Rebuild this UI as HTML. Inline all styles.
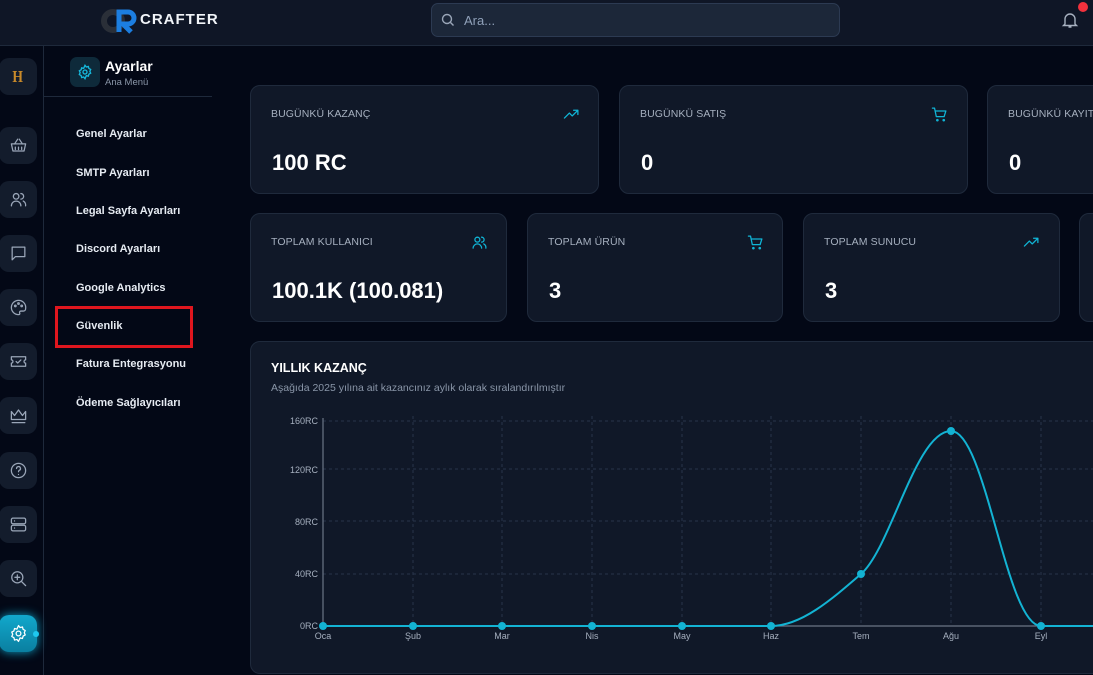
<!DOCTYPE html>
<html><head><meta charset="utf-8"><style>
*{box-sizing:border-box;margin:0;padding:0}
body{width:1093px;height:675px;overflow:hidden;background:#030816;font-family:"Liberation Sans",sans-serif;position:relative;color:#fff}
.hdr{position:absolute;left:0;top:0;width:1093px;height:46px;background:#0f1626;border-bottom:1px solid #1e293b}
.search{position:absolute;left:431px;top:3px;width:409px;height:34px;background:#1c2739;border:1px solid #2c3a52;border-radius:7px}
.search span{position:absolute;left:32px;top:9px;font-size:13px;color:#8fa0b8}
.rail{position:absolute;left:0;top:46px;width:44px;height:629px;border-right:1px solid #1e293b;background:#030816}
.ri{position:absolute;left:-1px;width:38px;height:37px;background:#131c2c;border-radius:10px;display:flex;align-items:center;justify-content:center}
.ri svg{width:19px;height:19px;fill:none;stroke:#9aa6b8;stroke-width:1.6;stroke-linecap:round;stroke-linejoin:round}
.side{position:absolute;left:44px;top:46px;width:168px}
.mi{position:absolute;left:32px;font-size:11px;font-weight:bold;color:#e6ebf2}
.card{position:absolute;background:#101828;border:1px solid #1f2a3c;border-radius:10px}
.lab{position:absolute;left:20px;top:22px;font-size:10.5px;color:#a6b0bf;letter-spacing:.1px}
.val{position:absolute;left:21px;top:64px;font-size:22px;font-weight:bold;color:#fff}
.ic{position:absolute;top:20px;width:17px;height:17px;fill:none;stroke:#10b5d6;stroke-width:1.8;stroke-linecap:round;stroke-linejoin:round}
</style></head><body>
<div class="hdr">
 <svg style="position:absolute;left:101px;top:8px" width="38" height="26" viewBox="0 0 38 26"><circle cx="12" cy="13" r="9" fill="none" stroke="#2a2f38" stroke-width="6"/><path d="M18 24V4h9a6 6 0 0 1 0 12h-5l8 8" fill="none" stroke="#1c7ee0" stroke-width="5"/></svg>
 <div style="position:absolute;left:140px;top:11px;font-size:15px;font-weight:bold;letter-spacing:1px;color:#f1f4f8">CRAFTER</div>
 <div class="search"><svg style="position:absolute;left:9px;top:9px" width="14" height="14" viewBox="0 0 14 14" fill="none" stroke="#9aa6b8" stroke-width="1.4"><circle cx="6" cy="6" r="4.5"/><path d="M9.5 9.5l3 3"/></svg><span>Ara...</span></div>
 <svg style="position:absolute;left:1061px;top:11px" width="18" height="18" viewBox="0 0 18 18" fill="none" stroke="#a6b0bf" stroke-width="1.4"><path d="M4 13V8a5 5 0 0 1 10 0v5l1.5 1.5h-13zM7.5 16h3"/></svg>
 <div style="position:absolute;left:1078px;top:2px;width:10px;height:10px;border-radius:50%;background:#f2313d"></div>
</div>
<div class="rail">
 <div class="ri" style="top:12px"><span style="font-family:'Liberation Serif',serif;font-weight:bold;color:#c98a2a;font-size:17px;transform:scaleX(.8);display:inline-block">H</span></div>
 <div class="ri" style="top:81px"><svg viewBox="0 0 24 24"><path d="M3 10h18l-2 9H5zM7 10l4-6M17 10l-4-6M8 14v3M12 14v3M16 14v3"/></svg></div>
 <div class="ri" style="top:135px"><svg viewBox="0 0 24 24"><circle cx="9" cy="8" r="3.5"/><path d="M3 20a6 6 0 0 1 12 0M15 4.5a3.5 3.5 0 0 1 0 7M18 14a6 6 0 0 1 3 6"/></svg></div>
 <div class="ri" style="top:189px"><svg viewBox="0 0 24 24"><path d="M4 4h16v12H8l-4 4z"/></svg></div>
 <div class="ri" style="top:243px"><svg viewBox="0 0 24 24"><path d="M12 3a9 9 0 0 0 0 18c1.5 0 2-1 1.5-2s0-2.5 1.5-2.5H18a3 3 0 0 0 3-3A9 9 0 0 0 12 3z"/><circle cx="8" cy="10" r="1"/><circle cx="12" cy="7" r="1"/><circle cx="16" cy="10" r="1"/></svg></div>
 <div class="ri" style="top:297px"><svg viewBox="0 0 24 24"><path d="M3 6h18v4a2 2 0 0 0 0 4v4H3v-4a2 2 0 0 0 0-4zM9 12l2 2 4-4"/></svg></div>
 <div class="ri" style="top:351px"><svg viewBox="0 0 24 24"><path d="M3 7l4 5 5-7 5 7 4-5v10H3zM4 21h16"/></svg></div>
 <div class="ri" style="top:406px"><svg viewBox="0 0 24 24"><circle cx="12" cy="12" r="9"/><path d="M9.5 9.5a2.5 2.5 0 1 1 3.5 2.3c-.7.4-1 1-1 1.7M12 17h.01"/></svg></div>
 <div class="ri" style="top:460px"><svg viewBox="0 0 24 24"><rect x="3" y="4" width="18" height="7" rx="2"/><rect x="3" y="13" width="18" height="7" rx="2"/><path d="M7 7.5h.01M7 16.5h.01"/></svg></div>
 <div class="ri" style="top:514px"><svg viewBox="0 0 24 24"><circle cx="10.5" cy="10.5" r="7"/><path d="M16 16l5 5M10.5 7.5v6M7.5 10.5h6"/></svg></div>
 <div class="ri" style="top:569px;background:linear-gradient(#12a8cc,#0a7fa0);box-shadow:0 0 10px #0e9fc4"><svg viewBox="0 0 24 24" style="stroke:#fff"><circle cx="12" cy="12" r="3"/><path d="M12 2l2 2.5 3-.8.8 3 2.7 1.5-1.2 2.8 1.2 2.8-2.7 1.5-.8 3-3-.8L12 22l-2-2.5-3 .8-.8-3-2.7-1.5L4.7 13 3.5 10.2 6.2 8.7l.8-3 3 .8z"/></svg></div>
 <div style="position:absolute;left:33px;top:585px;width:6px;height:6px;border-radius:50%;background:#1ec8ef"></div>
</div>
<div class="side">
 <div style="position:absolute;left:26px;top:11px;width:30px;height:30px;background:#0e2a3a;border-radius:7px;display:flex;align-items:center;justify-content:center"><svg width="16" height="16" viewBox="0 0 24 24" fill="none" stroke="#16b8dc" stroke-width="2"><circle cx="12" cy="12" r="3"/><path d="M12 2l2 2.5 3-.8.8 3 2.7 1.5-1.2 2.8 1.2 2.8-2.7 1.5-.8 3-3-.8L12 22l-2-2.5-3 .8-.8-3-2.7-1.5L4.7 13 3.5 10.2 6.2 8.7l.8-3 3 .8z"/></svg></div>
 <div style="position:absolute;left:61px;top:12px;font-size:14px;font-weight:bold">Ayarlar</div>
 <div style="position:absolute;left:61px;top:31px;font-size:9.5px;color:#8a96a8">Ana Menü</div>
 <div style="position:absolute;left:0;top:50px;width:168px;height:1px;background:#1e293b"></div>
 <div class="mi" style="top:82px">Genel Ayarlar</div>
 <div class="mi" style="top:121px">SMTP Ayarları</div>
 <div class="mi" style="top:159px">Legal Sayfa Ayarları</div>
 <div class="mi" style="top:197px">Discord Ayarları</div>
 <div class="mi" style="top:236px">Google Analytics</div>
 <div class="mi" style="top:274px">Güvenlik</div>
 <div class="mi" style="top:312px">Fatura Entegrasyonu</div>
 <div class="mi" style="top:351px">Ödeme Sağlayıcıları</div>
 <div style="position:absolute;left:11px;top:260px;width:138px;height:42px;border:3px solid #e0161e"></div>
</div>
<div class="card" style="left:250px;top:85px;width:349px;height:109px"><div class="lab">BUGÜNKÜ KAZANÇ</div><div class="val">100 RC</div><svg class="ic" style="left:312px" viewBox="0 0 24 24"><path d="M2 17l7-7 4 4 8-8M15 6h6v6"/></svg></div>
<div class="card" style="left:619px;top:85px;width:349px;height:109px"><div class="lab">BUGÜNKÜ SATIŞ</div><div class="val">0</div><svg class="ic" style="left:311px" viewBox="0 0 24 24"><path d="M2 3h3l2.5 12h11L21 7H6"/><circle cx="9" cy="20" r="1"/><circle cx="18" cy="20" r="1"/></svg></div>
<div class="card" style="left:987px;top:85px;width:130px;height:109px"><div class="lab">BUGÜNKÜ KAYIT</div><div class="val">0</div></div>
<div class="card" style="left:250px;top:213px;width:257px;height:109px"><div class="lab">TOPLAM KULLANICI</div><div class="val">100.1K (100.081)</div><svg class="ic" style="left:220px" viewBox="0 0 24 24"><circle cx="9" cy="8" r="3.5"/><path d="M3 20a6 6 0 0 1 12 0M15 4.5a3.5 3.5 0 0 1 0 7M18 14a6 6 0 0 1 3 6"/></svg></div>
<div class="card" style="left:527px;top:213px;width:256px;height:109px"><div class="lab">TOPLAM ÜRÜN</div><div class="val">3</div><svg class="ic" style="left:219px" viewBox="0 0 24 24"><path d="M2 3h3l2.5 12h11L21 7H6"/><circle cx="9" cy="20" r="1"/><circle cx="18" cy="20" r="1"/></svg></div>
<div class="card" style="left:803px;top:213px;width:257px;height:109px"><div class="lab">TOPLAM SUNUCU</div><div class="val">3</div><svg class="ic" style="left:219px" viewBox="0 0 24 24"><path d="M2 17l7-7 4 4 8-8M15 6h6v6"/></svg></div>
<div class="card" style="left:1079px;top:213px;width:40px;height:109px"></div>
<div class="card" style="left:250px;top:341px;width:870px;height:333px">
 <div style="position:absolute;left:20px;top:19px;font-size:12.5px;font-weight:bold">YILLIK KAZANÇ</div>
 <div style="position:absolute;left:20px;top:40px;font-size:10.5px;color:#8a96a8">Aşağıda 2025 yılına ait kazancınız aylık olarak sıralandırılmıştır</div>
</div>
<svg style="position:absolute;left:0;top:0" width="1093" height="675">
 <g stroke="#28344a" stroke-dasharray="3 3" stroke-width="1">
  <path d="M323 421H1093M323 469H1093M323 521H1093M323 574H1093"/>
  <path d="M413 416V626M502 416V626M592 416V626M682 416V626M771 416V626M861 416V626M951 416V626M1041 416V626"/>
 </g>
 <path d="M323 418V626H1093" fill="none" stroke="#6b7585" stroke-width="1.2"/>
 <g fill="#a6b0bf" font-size="9" text-anchor="end" font-family="Liberation Sans,sans-serif">
  <text x="318" y="424">160RC</text><text x="318" y="473">120RC</text><text x="318" y="525">80RC</text><text x="318" y="577">40RC</text><text x="318" y="629">0RC</text>
 </g>
 <g fill="#a6b0bf" font-size="9" text-anchor="middle" font-family="Liberation Sans,sans-serif">
  <text x="323" y="639">Oca</text><text x="413" y="639">Şub</text><text x="502" y="639">Mar</text><text x="592" y="639">Nis</text><text x="682" y="639">May</text><text x="771" y="639">Haz</text><text x="861" y="639">Tem</text><text x="951" y="639">Ağu</text><text x="1041" y="639">Eyl</text>
 </g>
 <path d="M323 626H771C801 626 831 600 861 574C891 548 916 431 951 431C986 431 1006 626 1041 626H1093" fill="none" stroke="#13b3d3" stroke-width="2"/>
 <g fill="#13b3d3"><circle cx="323" cy="626" r="4"/><circle cx="413" cy="626" r="4"/><circle cx="502" cy="626" r="4"/><circle cx="592" cy="626" r="4"/><circle cx="682" cy="626" r="4"/><circle cx="771" cy="626" r="4"/><circle cx="861" cy="574" r="4"/><circle cx="951" cy="431" r="4"/><circle cx="1041" cy="626" r="4"/></g>
</svg>
</body></html>
